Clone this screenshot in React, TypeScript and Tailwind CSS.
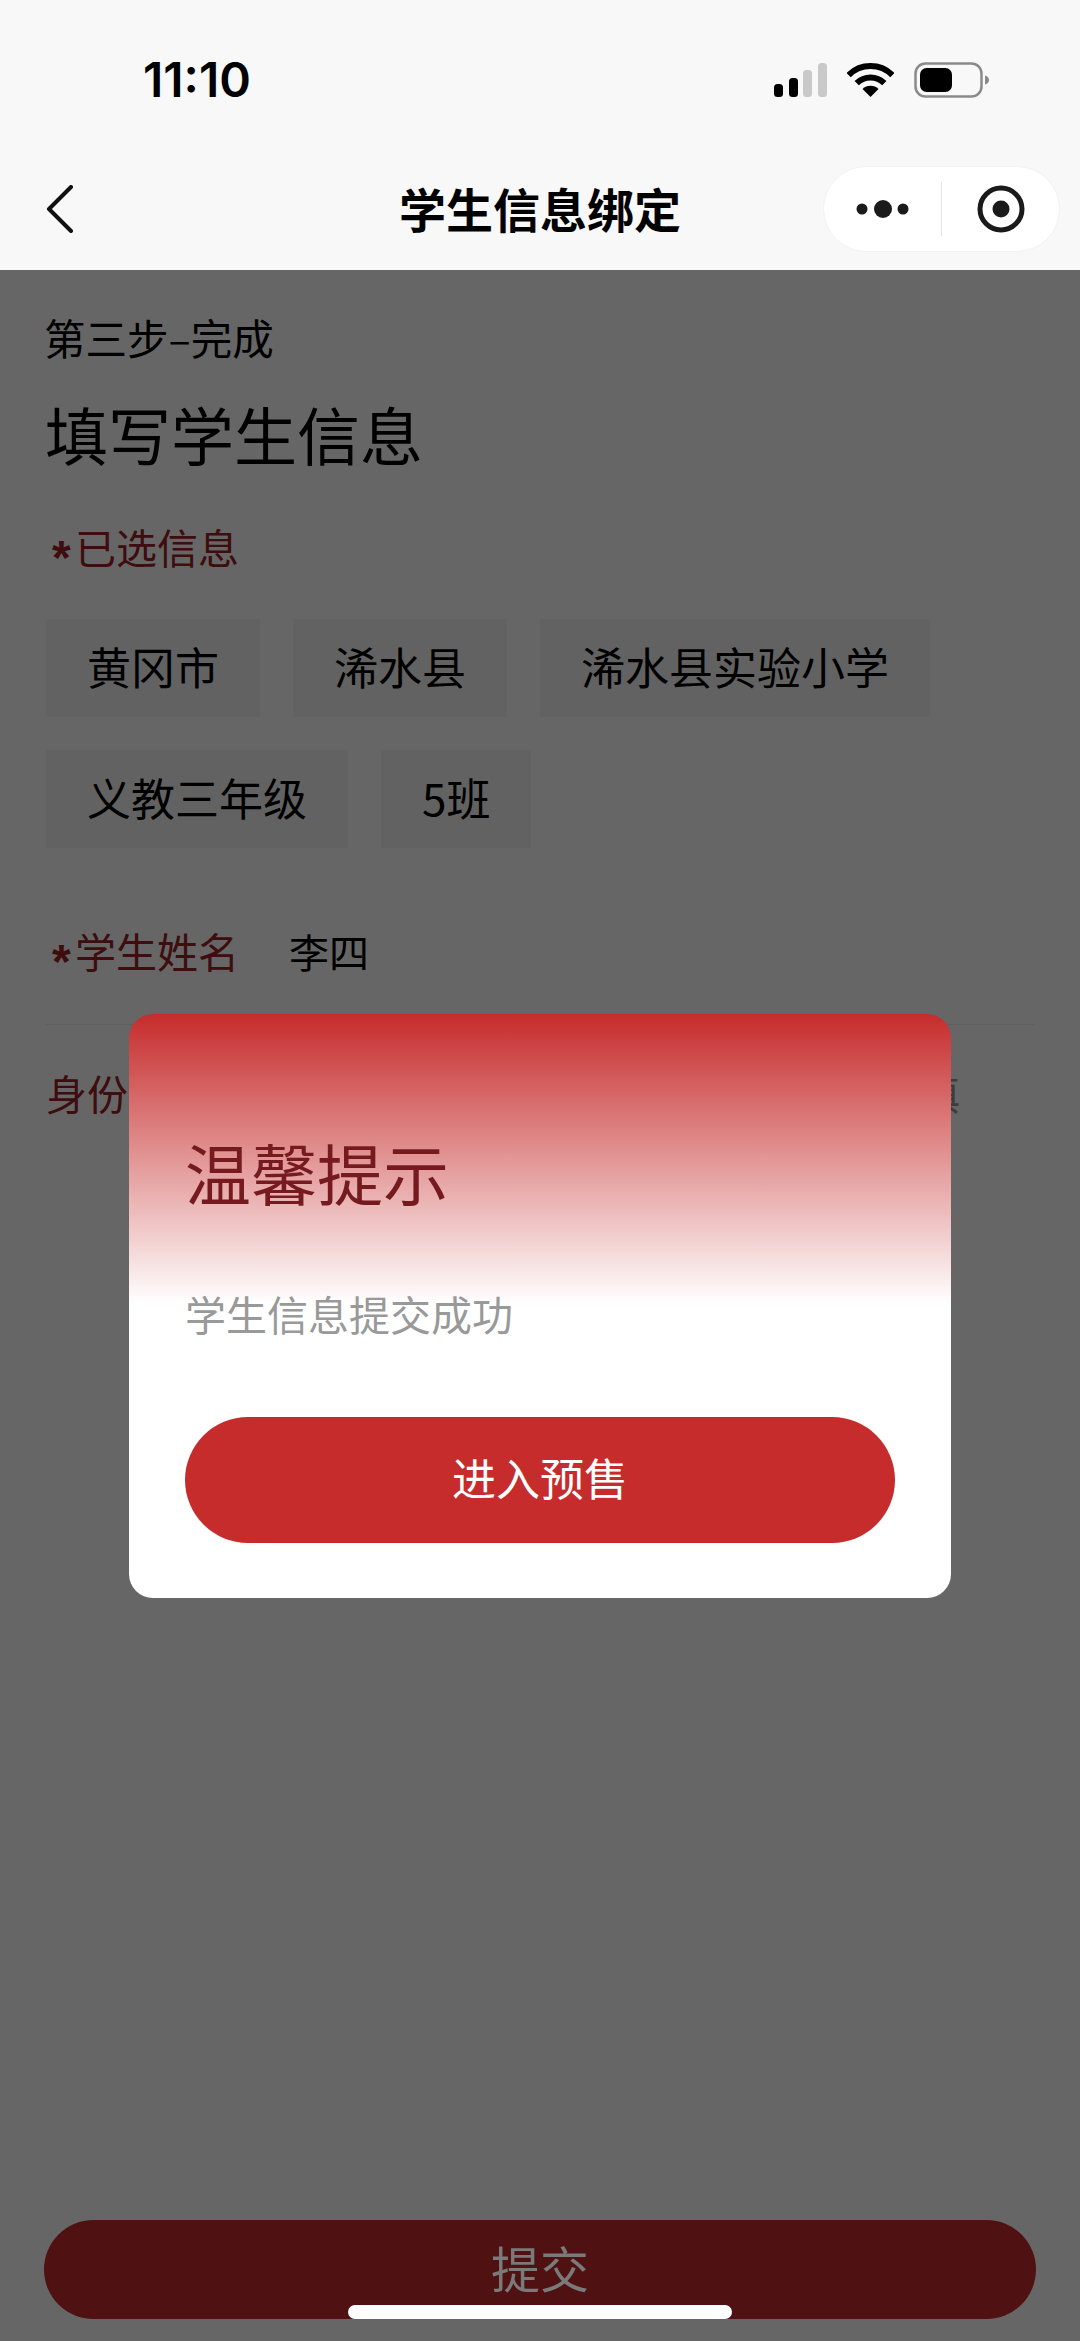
const cjk = "font-['Noto_Sans_CJK_SC','Noto_Sans',sans-serif]";
const labelRed = "text-[#9a2226]";

const Chip = ({ text }: { text: string }) => (
    <div className="h-[98px] px-[41px] pb-[4px] flex items-center bg-[#f5f5f5] text-[44px] leading-none text-black">{text}</div>
);

const RequiredLabel = ({ text }: { text: string }) => (
    <span className={`h-[40px] flex items-center text-[41px] leading-none ${labelRed}`}>
        <span className="ml-[6px] w-[23px] pt-[18px] font-bold font-['Liberation_Sans',sans-serif] text-[48px] leading-none">*</span>
        <span className="-mt-[4px]">{text}</span>
    </span>
);

const StatusIcons = () => (
    <div className="flex items-center gap-[20px]">
        {/* signal */}
        <svg width="53" height="34" viewBox="0 0 53 34">
            <rect x="0" y="21" width="9" height="13" rx="3.5" fill="#000" />
            <rect x="15" y="15" width="9" height="19" rx="3.5" fill="#000" />
            <rect x="29" y="7" width="9" height="27" rx="3.5" fill="#c9c9c9" />
            <rect x="44" y="0" width="9" height="34" rx="3.5" fill="#c9c9c9" />
        </svg>
        {/* wifi */}
        <svg width="47" height="34" viewBox="0 0 47 34">
            <path d="M1.6 12.1A31 31 0 0 1 45.4 12.1" fill="none" stroke="#000" strokeWidth="6" />
            <path d="M9.7 20.2A19.5 19.5 0 0 1 37.3 20.2" fill="none" stroke="#000" strokeWidth="6" />
            <path d="M23.5 34L15.5 26A11.3 11.3 0 0 1 31.5 26Z" fill="#000" />
        </svg>
        {/* battery */}
        <svg width="76" height="36" viewBox="0 0 76 36">
            <rect x="1.5" y="1.5" width="66" height="33" rx="10" fill="none" stroke="#8a8a8a" strokeWidth="2.5" />
            <rect x="6" y="6" width="32" height="24" rx="6.5" fill="#000" />
            <path d="M71 13.5C74 14.5 75 16 75 18C75 20 74 21.5 71 22.5Z" fill="#8a8a8a" />
        </svg>
    </div>
);

const Capsule = () => (
    <div className="w-[237px] h-[86px] rounded-full bg-white border border-[#f2f2f2] flex items-center">
        <div className="flex-1 flex justify-center">
            <svg width="56" height="20" viewBox="0 0 56 20">
                <circle cx="7" cy="10" r="5.5" fill="#1a1a1a" />
                <circle cx="28" cy="10" r="9" fill="#1a1a1a" />
                <circle cx="48" cy="10" r="5.5" fill="#1a1a1a" />
            </svg>
        </div>
        <div className="w-[1px] h-[54px] bg-[#e4e4e4]" />
        <div className="flex-1 flex justify-center">
            <svg width="48" height="48" viewBox="0 0 48 48">
                <circle cx="24" cy="24" r="21" fill="none" stroke="#1a1a1a" strokeWidth="5" />
                <circle cx="24" cy="24" r="8.5" fill="#1a1a1a" />
            </svg>
        </div>
    </div>
);

export default function App() {
    return (
        <div className={`relative w-[1080px] h-[2341px] overflow-hidden bg-white flex flex-col ${cjk}`}>

            {/* status bar + nav bar */}
            <header className="relative z-20 h-[270px] pt-[63px] bg-[#f8f8f8]">
                <div className="flex items-center justify-between h-[34px] pl-[143px] pr-[90px]">
                    <span className="font-['Inter',sans-serif] font-semibold text-[48px] leading-none text-black">11:10</span>
                    <StatusIcons />
                </div>
                <div className="grid grid-cols-[1fr_auto_1fr] items-center h-[86px] mt-[69px] px-[20px]">
                    <svg className="ml-[26px]" width="28" height="48" viewBox="0 0 28 48">
                        <path d="M25 2L3 24L25 46" fill="none" stroke="#111" strokeWidth="4" strokeLinecap="round" strokeLinejoin="round" />
                    </svg>
                    <h1 className="pb-[4px] text-[47px] leading-none font-bold text-black">学生信息绑定</h1>
                    <div className="flex justify-end"><Capsule /></div>
                </div>
            </header>

            {/* form under the mask */}
            <main className="flex-1 px-[46px] text-black">
                <div className="-ml-[2px] mt-[47px] text-[41.5px] leading-none">第三步–完成</div>
                <div className="-ml-[1px] mt-[42px] text-[63px] leading-none">填写学生信息</div>

                <div className="mt-[65px]"><RequiredLabel text="已选信息" /></div>
                <div className="mt-[50px] flex flex-wrap gap-x-[33px] gap-y-[33px]">
                    <Chip text="黄冈市" />
                    <Chip text="浠水县" />
                    <Chip text="浠水县实验小学" />
                    <Chip text="义教三年级" />
                    <Chip text="5班" />
                </div>

                <div className="mt-[85px] pb-[51px] border-b border-[#eeeeee] flex items-center">
                    <RequiredLabel text="学生姓名" />
                    <span className="ml-[50px] -mt-[4px] text-[40px] leading-none">李四</span>
                </div>
                <div className="mt-[47px] pr-[74px] flex justify-between text-[41px] leading-none">
                    <span className={labelRed}>身份证号</span>
                    <span className="text-[#999999]">选填</span>
                </div>
            </main>

            <div className="px-[44px] pb-[22px]">
                <div className="h-[99px] pb-[6px] rounded-full bg-[#c62c2c] flex items-center justify-center text-[49px] leading-none">
                    <span className="relative z-20 text-[#7a7a7a]">提交</span>
                </div>
            </div>

            {/* mask + dialog */}
            <div className="absolute left-0 right-0 top-[270px] bottom-0 z-10 bg-black/60 flex items-center justify-center">
                <div className="w-[822px] rounded-[24px] px-[56px] pt-[124px] pb-[55px] bg-[linear-gradient(180deg,#c62c2c_0,#ffffff_290px)]">
                    <div className="text-[66px] leading-none text-[#751a1e]">温馨提示</div>
                    <div className="mt-[89px] text-[41px] leading-none text-[#999999]">学生信息提交成功</div>
                    <div className="mt-[83px] h-[126px] pb-[5px] rounded-full bg-[#c62c2c] flex items-center justify-center text-[44px] leading-none text-white">进入预售</div>
                </div>
            </div>

            {/* home indicator */}
            <div className="absolute z-30 left-[348px] bottom-[22px] w-[384px] h-[14px] rounded-full bg-white" />
        </div>
    );
}
